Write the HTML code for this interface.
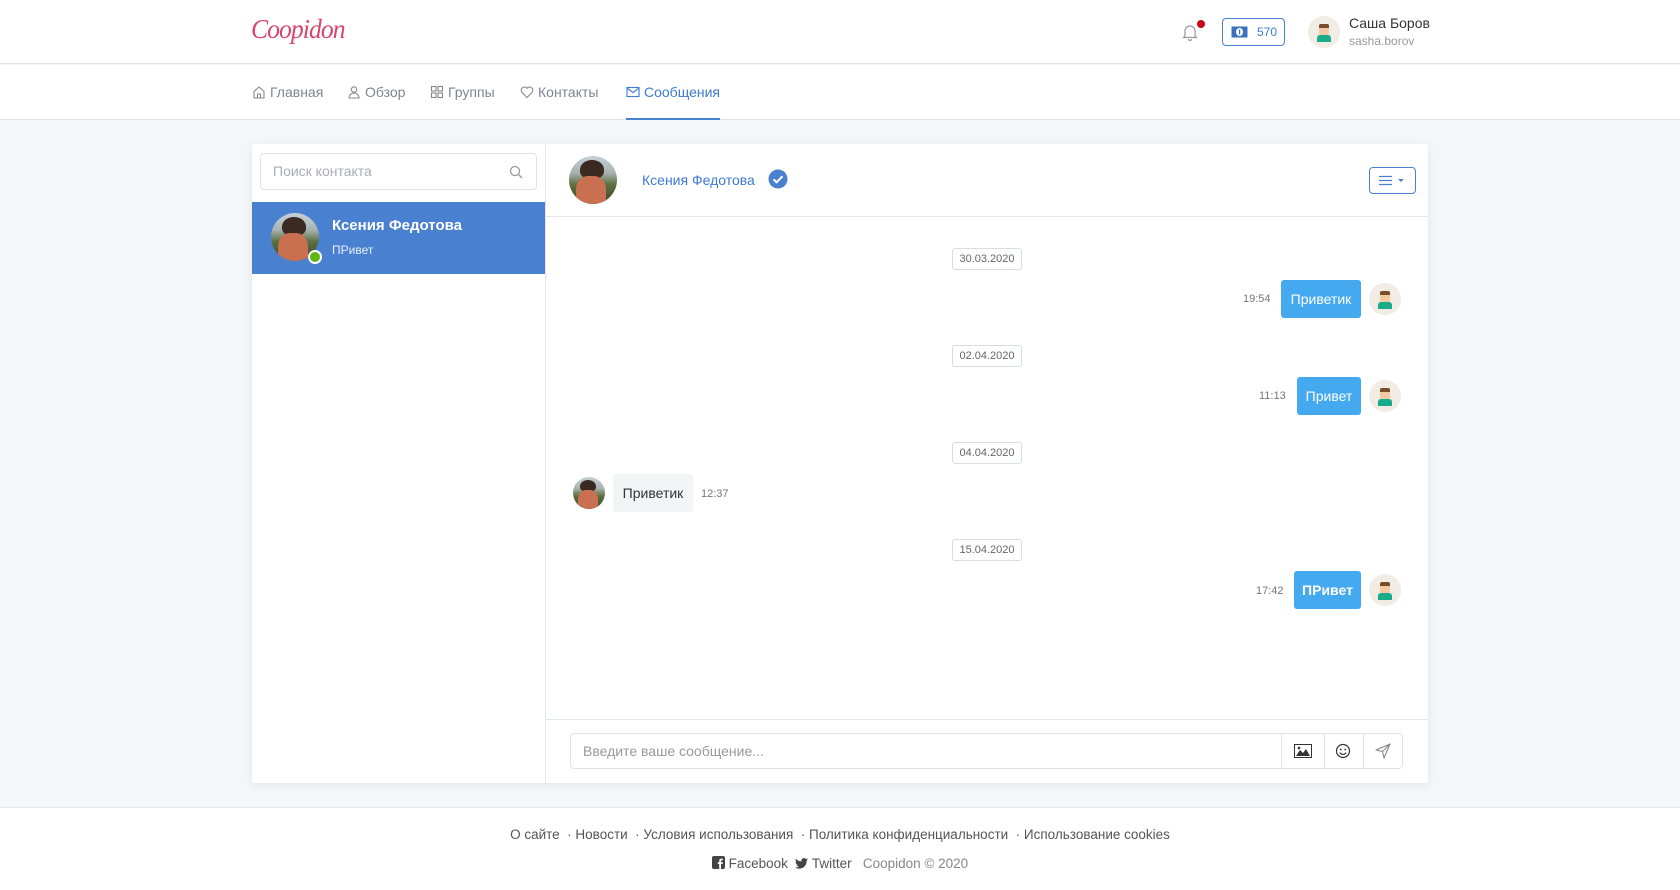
<!DOCTYPE html>
<html><head><meta charset="utf-8"><style>
*{box-sizing:border-box;margin:0;padding:0}
body{width:1680px;height:890px;background:#f4f6fa;font-family:"Liberation Sans",sans-serif;color:#333;position:relative;overflow:hidden}
.abs{position:absolute}
header{position:absolute;left:0;top:0;width:1680px;height:64px;background:#fff;border-bottom:1px solid #dfe4ec}
nav{position:absolute;left:0;top:65px;width:1680px;height:55px;background:#fff;border-bottom:1px solid #dfe4ec}
.nv{position:absolute;top:19px;font-size:14px;color:#7d8594;display:flex;align-items:center;gap:4px}
.nv svg{width:14px;height:14px}
.panel{position:absolute;left:252px;top:144px;width:1176px;height:639px;background:#fff;box-shadow:0 2px 8px rgba(0,0,0,.08)}
.date{position:absolute;left:952px;width:70px;height:22px;border:1px solid #d9dde3;border-radius:3px;font-size:11px;color:#666;text-align:center;line-height:20px;background:#fff}
.out{position:absolute;height:38px;background:#45a9ef;color:#fff;border-radius:3px;font-size:14px;line-height:38px;text-align:center}
.tm{position:absolute;font-size:11px;color:#777}
.av{position:absolute;width:32px;height:32px;border-radius:50%;background:#f1ece4;overflow:hidden}
.photo{position:absolute;border-radius:50%;overflow:hidden;background:linear-gradient(180deg,#c7d0d6 0%,#a8b3b0 35%,#5c6f3f 60%,#3e4a2c 100%)}
.photo:before{content:"";position:absolute;left:22%;top:8%;width:50%;height:40%;border-radius:50% 50% 40% 40%;background:#3a2a22}
.photo:after{content:"";position:absolute;left:15%;top:42%;width:62%;height:70%;border-radius:40% 40% 0 0;background:#c8704f}
footer{position:absolute;left:0;top:807px;width:1680px;height:83px;background:#fff;border-top:1px solid #e4e7ec;font-size:13.5px;color:#555}
</style></head><body>
<header>
 <div class="abs" style="left:251px;top:14px;font-family:'Liberation Serif',serif;font-style:italic;font-size:27px;color:#d8456c;letter-spacing:-1px;transform:scaleX(0.95);transform-origin:left">Coopidon</div>
 <svg class="abs" style="left:1182px;top:23px" width="16" height="18" viewBox="0 0 16 18"><path d="M3 13V8a5 5 0 0 1 10 0v5l1.5 1.5h-13z M6.5 16a1.5 1.5 0 0 0 3 0" fill="none" stroke="#999" stroke-width="1.2"/></svg>
 <div class="abs" style="left:1197px;top:20px;width:8px;height:8px;border-radius:50%;background:#d0021b"></div>
 <div class="abs" style="left:1222px;top:18px;width:63px;height:28px;border:1px solid #4a80d0;border-radius:4px;color:#3d7bd3;font-size:12px;line-height:26px;padding-left:34px">570</div>
 <svg class="abs" style="left:1231px;top:26px" width="17" height="12" viewBox="0 0 17 12"><rect x="0.5" y="0.5" width="16" height="11" fill="#3d6fbf"/><ellipse cx="8.5" cy="6" rx="3.5" ry="4" fill="#fff"/><rect x="8" y="3.5" width="1.2" height="5" fill="#3d6fbf"/></svg>
 <div class="av" style="left:1308px;top:16px;width:32px;height:32px"><div class="abs" style="left:11px;top:8px;width:10px;height:11px;background:#f3c9a4;border-top:4px solid #7a4a2a;border-radius:2px"></div><div class="abs" style="left:9px;top:19px;width:14px;height:7px;background:#1aab8a;border-radius:3px 3px 0 0"></div></div>
 <div class="abs" style="left:1349px;top:15px;font-size:14px;color:#333">Саша Боров</div>
 <div class="abs" style="left:1349px;top:34px;font-size:12px;color:#999">sasha.borov</div>
</header>
<nav>
 <div class="nv" style="left:252px"><svg viewBox="0 0 14 14"><path d="M2 6.5L7 2l5 4.5V13H2z M5.5 13V9h3v4" fill="none" stroke="#888" stroke-width="1.1"/></svg>Главная</div>
 <div class="nv" style="left:347px"><svg viewBox="0 0 14 14"><circle cx="7" cy="4.5" r="2.7" fill="none" stroke="#888" stroke-width="1.1"/><path d="M2 13a5 5 0 0 1 10 0z" fill="none" stroke="#888" stroke-width="1.1"/></svg>Обзор</div>
 <div class="nv" style="left:430px"><svg viewBox="0 0 14 14"><g fill="none" stroke="#888" stroke-width="1.1"><rect x="1.5" y="1.5" width="4.5" height="4.5"/><rect x="8" y="1.5" width="4.5" height="4.5"/><rect x="1.5" y="8" width="4.5" height="4.5"/><rect x="8" y="8" width="4.5" height="4.5"/></g></svg>Группы</div>
 <div class="nv" style="left:520px"><svg viewBox="0 0 14 14"><path d="M7 12.5L1.8 7.2A3 3 0 0 1 7 3.3a3 3 0 0 1 5.2 3.9z" fill="none" stroke="#888" stroke-width="1.1"/></svg>Контакты</div>
 <div class="nv" style="left:626px;color:#3d7bd3"><svg viewBox="0 0 14 14"><rect x="1" y="2.5" width="12" height="9" fill="none" stroke="#3d7bd3" stroke-width="1.1"/><path d="M1 3l6 4.5L13 3" fill="none" stroke="#3d7bd3" stroke-width="1.1"/></svg>Сообщения</div>
 <div class="abs" style="left:626px;top:53px;width:94px;height:2px;background:#4a80d0"></div>
</nav>
<div class="panel">
 <div class="abs" style="left:293px;top:0;width:1px;height:639px;background:#e3e6eb"></div>
 <div class="abs" style="left:8px;top:9px;width:277px;height:37px;border:1px solid #dfe3e9;border-radius:4px;font-size:14px;color:#aab;line-height:35px;padding-left:12px">Поиск контакта</div>
 <svg class="abs" style="left:257px;top:21px" width="14" height="14" viewBox="0 0 14 14"><circle cx="6" cy="6" r="4.5" fill="none" stroke="#999" stroke-width="1.3"/><path d="M9.5 9.5L13 13" stroke="#999" stroke-width="1.3"/></svg>
 <div class="abs" style="left:0;top:58px;width:293px;height:72px;background:#4a80d0"></div>
 <div class="photo" style="left:19px;top:69px;width:48px;height:48px"></div>
 <div class="abs" style="left:56px;top:106px;width:14px;height:14px;border-radius:50%;background:#5cb811;border:2px solid #fff"></div>
 <div class="abs" style="left:80px;top:73px;font-size:15px;font-weight:bold;color:#fff">Ксения Федотова</div>
 <div class="abs" style="left:80px;top:99px;font-size:12px;color:#e8eef8">ПРивет</div>
 <div class="photo" style="left:317px;top:12px;width:48px;height:48px"></div>
 <div class="abs" style="left:390px;top:28px;font-size:14px;color:#3d7bd3">Ксения Федотова</div>
 <svg class="abs" style="left:516px;top:25px" width="20" height="20" viewBox="0 0 20 20"><circle cx="10" cy="10" r="9.5" fill="#4a80d0"/><path d="M5.5 10.3l3 3 6-6" fill="none" stroke="#fff" stroke-width="2"/></svg>
 <div class="abs" style="left:1117px;top:23px;width:47px;height:27px;border:1px solid #4a80d0;border-radius:4px"></div>
 <svg class="abs" style="left:1126px;top:30px" width="30" height="13" viewBox="0 0 30 13"><path d="M1 2.5h13M1 6.5h13M1 10.5h13" stroke="#4a80d0" stroke-width="1.3"/><path d="M20 5h6l-3 3z" fill="#4a80d0"/></svg>
 <div class="abs" style="left:293px;top:72px;width:883px;height:1px;background:#e3e6eb"></div>
 <div class="abs" style="left:293px;top:575px;width:883px;height:1px;background:#e3e6eb"></div>
 <div class="abs" style="left:318px;top:589px;width:833px;height:36px;border:1px solid #dfe3e9;border-radius:4px;font-size:14px;color:#999;line-height:34px;padding-left:12px">Введите ваше сообщение...</div>
 <div class="abs" style="left:1029px;top:589px;width:1px;height:36px;background:#dfe3e9"></div>
 <div class="abs" style="left:1072px;top:589px;width:1px;height:36px;background:#dfe3e9"></div>
 <div class="abs" style="left:1111px;top:589px;width:1px;height:36px;background:#dfe3e9"></div>
 <svg class="abs" style="left:1042px;top:600px" width="18" height="14" viewBox="0 0 18 14"><rect x="0.5" y="0.5" width="17" height="13" fill="#fff" stroke="#333"/><path d="M2 12l4-6 3 3 3-4 4 7z" fill="#333"/><circle cx="5" cy="4" r="1.3" fill="#333"/></svg>
 <svg class="abs" style="left:1083px;top:599px" width="16" height="16" viewBox="0 0 16 16"><circle cx="8" cy="8" r="6.5" fill="none" stroke="#333" stroke-width="1.2"/><circle cx="5.8" cy="6.5" r=".9" fill="#333"/><circle cx="10.2" cy="6.5" r=".9" fill="#333"/><path d="M5 9.5a3.3 3.3 0 0 0 6 0" fill="none" stroke="#333" stroke-width="1.2"/></svg>
 <svg class="abs" style="left:1123px;top:599px" width="16" height="16" viewBox="0 0 16 16"><path d="M1 7L15 1 9 15 7.5 8.5z M7.5 8.5L15 1" fill="none" stroke="#888" stroke-width="1.1" stroke-linejoin="round"/></svg>
</div>
<div class="date" style="top:248px">30.03.2020</div>
<div class="tm" style="left:1243px;top:293px">19:54</div>
<div class="out" style="left:1281px;top:280px;width:80px">Приветик</div>
<div class="date" style="top:345px">02.04.2020</div>
<div class="tm" style="left:1259px;top:390px">11:13</div>
<div class="out" style="left:1297px;top:377px;width:64px">Привет</div>
<div class="date" style="top:442px">04.04.2020</div>
<div class="photo" style="left:573px;top:477px;width:32px;height:32px"></div>
<div class="abs" style="left:613px;top:474px;width:80px;height:38px;background:#f3f4f6;border-radius:3px;font-size:14px;line-height:38px;text-align:center;color:#333">Приветик</div>
<div class="tm" style="left:701px;top:488px">12:37</div>
<div class="date" style="top:539px">15.04.2020</div>
<div class="tm" style="left:1256px;top:585px">17:42</div>
<div class="out" style="left:1294px;top:571px;width:67px;font-weight:bold">ПРивет</div>
<div class="av" style="left:1369px;top:283px"><div class="abs" style="left:11px;top:8px;width:10px;height:11px;background:#f3c9a4;border-top:4px solid #7a4a2a;border-radius:2px"></div><div class="abs" style="left:9px;top:19px;width:14px;height:7px;background:#1aab8a;border-radius:3px 3px 0 0"></div></div>
<div class="av" style="left:1369px;top:380px"><div class="abs" style="left:11px;top:8px;width:10px;height:11px;background:#f3c9a4;border-top:4px solid #7a4a2a;border-radius:2px"></div><div class="abs" style="left:9px;top:19px;width:14px;height:7px;background:#1aab8a;border-radius:3px 3px 0 0"></div></div>
<div class="av" style="left:1369px;top:574px"><div class="abs" style="left:11px;top:8px;width:10px;height:11px;background:#f3c9a4;border-top:4px solid #7a4a2a;border-radius:2px"></div><div class="abs" style="left:9px;top:19px;width:14px;height:7px;background:#1aab8a;border-radius:3px 3px 0 0"></div></div>
<footer>
 <div class="abs" style="left:0;width:1680px;top:19px;text-align:center">О сайте &nbsp;· Новости &nbsp;· Условия использования &nbsp;· Политика конфиденциальности &nbsp;· Использование cookies</div>
 <div class="abs" style="left:0;width:1680px;top:48px;text-align:center"><svg width="13" height="13" viewBox="0 0 13 13" style="vertical-align:-1px"><rect width="13" height="13" rx="2" fill="#444"/><path d="M9 13V8h1.6l.3-1.8H9V5.1c0-.5.2-.9.9-.9h1V2.6H9.5C8 2.6 7.2 3.5 7.2 4.9v1.3H5.8V8h1.4v5z" fill="#fff"/></svg> Facebook &nbsp;<svg width="13" height="11" viewBox="0 0 24 20" style="vertical-align:-1px"><path d="M24 2.4a10 10 0 0 1-2.8.8A5 5 0 0 0 23.3.4a10 10 0 0 1-3.1 1.2A4.9 4.9 0 0 0 11.8 6 14 14 0 0 1 1.7.9a4.9 4.9 0 0 0 1.5 6.6A4.900 4.900 0 0 1 1 6.9a4.9 4.9 0 0 0 3.9 4.8 5 5 0 0 1-2.2.1 4.9 4.9 0 0 0 4.6 3.4A9.900 9.900 0 0 1 0 17.3 14 14 0 0 0 7.5 19.5c9.100 0 14-7.500 14-14v-.6A10 10 0 0 0 24 2.4z" fill="#444"/></svg> Twitter &nbsp; <span style="color:#888">Coopidon © 2020</span></div>
</footer>
</body></html>
